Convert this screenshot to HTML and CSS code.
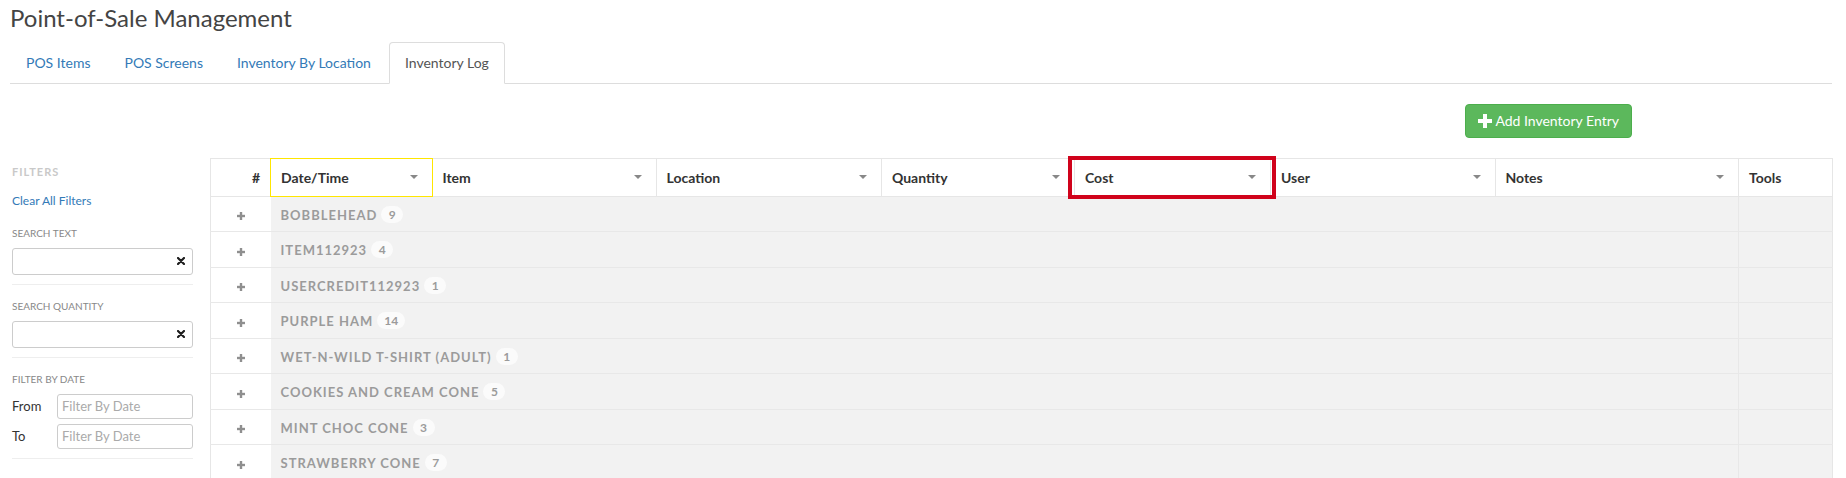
FILE: index.html
```html
<!DOCTYPE html>
<html>
<head>
<meta charset="utf-8">
<title>Point-of-Sale Management</title>
<link rel="stylesheet" href="styles.css">
</head>
<body>
<div class="page">
  <h1 class="title">Point-of-Sale Management</h1>
  <ul class="tabs">
    <li><a>POS Items</a></li>
    <li><a>POS Screens</a></li>
    <li><a>Inventory By Location</a></li>
    <li class="active"><a>Inventory Log</a></li>
  </ul>

  <div class="toolbar">
    <button class="btn-add" type="button">
      <svg class="plus-icon" width="14" height="14" viewBox="0 0 14 14"><rect x="5" y="0" width="4" height="14" fill="#fff"/><rect x="0" y="5" width="14" height="4" fill="#fff"/></svg>
      <span>Add Inventory Entry</span>
    </button>
  </div>

  <div class="content">
    <aside class="filters">
      <div class="f-title">Filters</div>
      <a class="f-clear">Clear All Filters</a>

      <div class="f-label f-first">Search Text</div>
      <div class="f-input">
        <input type="text">
        <svg class="x-icon" width="8" height="8" viewBox="0 0 8 8"><path d="M1 1 L7 7 M7 1 L1 7" stroke="#1e1e1e" stroke-width="2.2" stroke-linecap="round"/></svg>
      </div>
      <div class="f-sep"></div>

      <div class="f-label">Search Quantity</div>
      <div class="f-input">
        <input type="text">
        <svg class="x-icon" width="8" height="8" viewBox="0 0 8 8"><path d="M1 1 L7 7 M7 1 L1 7" stroke="#1e1e1e" stroke-width="2.2" stroke-linecap="round"/></svg>
      </div>
      <div class="f-sep"></div>

      <div class="f-label">Filter By Date</div>
      <div class="f-date">
        <span class="f-date-label">From</span>
        <input class="f-date-input" type="text" placeholder="Filter By Date">
      </div>
      <div class="f-date f-date-second">
        <span class="f-date-label">To</span>
        <input class="f-date-input" type="text" placeholder="Filter By Date">
      </div>
      <div class="f-sep"></div>
    </aside>

    <table class="grid">
      <colgroup>
        <col class="c-num"><col class="c-date"><col class="c-item"><col class="c-loc"><col class="c-qty"><col class="c-cost"><col class="c-user"><col class="c-notes"><col class="c-tools">
      </colgroup>
      <thead>
        <tr>
          <th class="th-num">#</th>
          <th class="th-sel"><div class="th-in"><span>Date/Time</span><i class="caret"></i></div></th>
          <th><div class="th-in"><span>Item</span><i class="caret"></i></div></th>
          <th><div class="th-in"><span>Location</span><i class="caret"></i></div></th>
          <th><div class="th-in"><span>Quantity</span><i class="caret"></i></div></th>
          <th class="th-mark"><div class="th-in"><span>Cost</span><i class="caret"></i></div></th>
          <th><div class="th-in"><span>User</span><i class="caret"></i></div></th>
          <th><div class="th-in"><span>Notes</span><i class="caret"></i></div></th>
          <th><div class="th-in"><span>Tools</span></div></th>
        </tr>
      </thead>
      <tbody>
        <tr><td class="td-exp"><svg class="row-plus" width="8" height="8" viewBox="0 0 8 8"><rect x="2.8" y="0" width="2.4" height="8" fill="#8f8f8f"/><rect x="0" y="2.8" width="8" height="2.4" fill="#8f8f8f"/></svg></td><td class="td-group" colspan="7"><span class="g-name">Bobblehead</span><span class="g-count">9</span></td><td class="td-tools"></td></tr>
        <tr><td class="td-exp"><svg class="row-plus" width="8" height="8" viewBox="0 0 8 8"><rect x="2.8" y="0" width="2.4" height="8" fill="#8f8f8f"/><rect x="0" y="2.8" width="8" height="2.4" fill="#8f8f8f"/></svg></td><td class="td-group" colspan="7"><span class="g-name">Item112923</span><span class="g-count">4</span></td><td class="td-tools"></td></tr>
        <tr><td class="td-exp"><svg class="row-plus" width="8" height="8" viewBox="0 0 8 8"><rect x="2.8" y="0" width="2.4" height="8" fill="#8f8f8f"/><rect x="0" y="2.8" width="8" height="2.4" fill="#8f8f8f"/></svg></td><td class="td-group" colspan="7"><span class="g-name">UserCredit112923</span><span class="g-count">1</span></td><td class="td-tools"></td></tr>
        <tr><td class="td-exp"><svg class="row-plus" width="8" height="8" viewBox="0 0 8 8"><rect x="2.8" y="0" width="2.4" height="8" fill="#8f8f8f"/><rect x="0" y="2.8" width="8" height="2.4" fill="#8f8f8f"/></svg></td><td class="td-group" colspan="7"><span class="g-name">Purple Ham</span><span class="g-count">14</span></td><td class="td-tools"></td></tr>
        <tr><td class="td-exp"><svg class="row-plus" width="8" height="8" viewBox="0 0 8 8"><rect x="2.8" y="0" width="2.4" height="8" fill="#8f8f8f"/><rect x="0" y="2.8" width="8" height="2.4" fill="#8f8f8f"/></svg></td><td class="td-group" colspan="7"><span class="g-name">Wet-N-Wild T-Shirt (Adult)</span><span class="g-count">1</span></td><td class="td-tools"></td></tr>
        <tr><td class="td-exp"><svg class="row-plus" width="8" height="8" viewBox="0 0 8 8"><rect x="2.8" y="0" width="2.4" height="8" fill="#8f8f8f"/><rect x="0" y="2.8" width="8" height="2.4" fill="#8f8f8f"/></svg></td><td class="td-group" colspan="7"><span class="g-name">Cookies and Cream Cone</span><span class="g-count">5</span></td><td class="td-tools"></td></tr>
        <tr><td class="td-exp"><svg class="row-plus" width="8" height="8" viewBox="0 0 8 8"><rect x="2.8" y="0" width="2.4" height="8" fill="#8f8f8f"/><rect x="0" y="2.8" width="8" height="2.4" fill="#8f8f8f"/></svg></td><td class="td-group" colspan="7"><span class="g-name">Mint Choc Cone</span><span class="g-count">3</span></td><td class="td-tools"></td></tr>
        <tr><td class="td-exp"><svg class="row-plus" width="8" height="8" viewBox="0 0 8 8"><rect x="2.8" y="0" width="2.4" height="8" fill="#8f8f8f"/><rect x="0" y="2.8" width="8" height="2.4" fill="#8f8f8f"/></svg></td><td class="td-group" colspan="7"><span class="g-name">Strawberry Cone</span><span class="g-count">7</span></td><td class="td-tools"></td></tr>
      </tbody>
    </table>
  </div>
</div>
</body>
</html>
```

FILE: styles.css
```css
* { box-sizing: border-box; }

body {
  margin: 0;
  background: #fff;
  color: #333;
  font-family: Lato, "Open Sans", "Liberation Sans", sans-serif;
}

.page {
  padding: 0 14px 0 10px;
}

.title {
  margin: 5px 0 0 0;
  font-size: 24px;
  line-height: 1.1;
  font-weight: 400;
  color: #444;
}

/* Tabs */
.tabs {
  list-style: none;
  margin: 10.6px 0 0 0;
  padding: 0;
  display: flex;
  border-bottom: 1px solid #ddd;
}
.tabs li {
  margin-right: 2px;
  margin-bottom: -1px;
}
.tabs a {
  display: block;
  padding: 10px 15px;
  font-size: 14px;
  line-height: 20px;
  color: #337ab7;
  border: 1px solid transparent;
  border-radius: 4px 4px 0 0;
}
.tabs .active a {
  color: #555;
  background: #fff;
  border-color: #ddd #ddd transparent;
}

/* Toolbar */
.toolbar {
  display: flex;
  justify-content: flex-end;
  padding-right: 200px;
  margin-top: 20px;
}
.btn-add {
  display: inline-flex;
  align-items: center;
  gap: 3px;
  height: 34px;
  padding: 6px 12px;
  font-family: Lato, "Open Sans", sans-serif;
  font-size: 14px;
  line-height: 20px;
  color: #fff;
  background: #5cb85c;
  border: 1px solid #4cae4c;
  border-radius: 4px;
}
.plus-icon { display: block; }

/* Content */
.content {
  display: flex;
  align-items: flex-start;
  gap: 17px;
  margin-top: 20px;
}

/* Filters sidebar */
.filters {
  flex: none;
  width: 181px;
  margin-left: 2px;
  padding-top: 7px;
}
.f-title {
  font-size: 11px;
  line-height: 14px;
  font-weight: 700;
  letter-spacing: 1px;
  text-transform: uppercase;
  color: #c9c9c9;
}
.f-clear {
  display: block;
  margin-top: 14px;
  font-size: 12px;
  line-height: 16px;
  color: #337ab7;
}
.f-label {
  font-size: 10px;
  line-height: 14px;
  color: #888;
  text-transform: uppercase;
  margin-bottom: 8px;
}
.f-first { margin-top: 17px; }
.f-input {
  display: flex;
  align-items: center;
  height: 27px;
  border: 1px solid #ccc;
  border-radius: 3px;
  padding-right: 7px;
}
.f-input input {
  flex: 1;
  min-width: 0;
  height: 100%;
  border: 0;
  outline: none;
  background: transparent;
  font: 13px Lato, sans-serif;
}
.x-icon { display: block; flex: none; }
.f-sep {
  height: 1px;
  background: #eee;
  margin: 9px 0 14px;
}
.f-date {
  display: flex;
  align-items: center;
  height: 25px;
}
.f-date-second { margin-top: 5px; }
.f-date-label {
  width: 45px;
  flex: none;
  font-size: 13px;
  color: #333;
}
.f-date-input {
  flex: 1;
  min-width: 0;
  height: 25px;
  padding: 0 4px;
  border: 1px solid #ccc;
  border-radius: 3px;
  font: 13px Lato, sans-serif;
  color: #555;
}
.f-date-input::placeholder { color: #aaa; }

/* Grid */
.grid {
  flex: 1;
  width: 1622px;
  border-collapse: collapse;
  table-layout: fixed;
  font-size: 14px;
}
.c-num { width: 60px; }
.c-date { width: 161.5px; }
.c-item { width: 224px; }
.c-loc { width: 225.5px; }
.c-qty { width: 193px; }
.c-cost { width: 196px; }
.c-user { width: 224.5px; }
.c-notes { width: 243.5px; }
.c-tools { width: 94px; }

.grid th {
  position: relative;
  height: 38px;
  padding: 0 10px;
  border: 1px solid #e6e6e6;
  background: #fff;
  font-weight: 700;
  color: #333;
  text-align: left;
  white-space: nowrap;
}
.grid th.th-num { text-align: right; }
.th-in {
  display: flex;
  align-items: center;
  justify-content: space-between;
}
.caret {
  width: 0;
  height: 0;
  margin-right: 4px;
  border-left: 4px solid transparent;
  border-right: 4px solid transparent;
  border-top: 4px solid #888;
}
.th-sel::after {
  content: "";
  position: absolute;
  left: -1px;
  top: -1px;
  right: -1px;
  bottom: -1px;
  border: 1px solid #ffe600;
  pointer-events: none;
  z-index: 2;
}
.th-mark::after {
  content: "";
  position: absolute;
  left: -7px;
  top: -3px;
  right: -6px;
  bottom: -3px;
  border: 4px solid #d0021b;
  pointer-events: none;
  z-index: 3;
}

.grid td {
  height: 35.5px;
  padding: 0 10px;
  border-top: 1px solid #e8e8e8;
  border-bottom: 1px solid #e8e8e8;
  vertical-align: middle;
}
.td-exp {
  background: #fff;
  text-align: center;
  border-left: 1px solid #e6e6e6;
}
.row-plus { display: inline-block; vertical-align: middle; }
.td-group {
  background: #f2f2f2;
  white-space: nowrap;
}
.td-tools {
  background: #f2f2f2;
  border-left: 1px solid #e8e8e8;
  border-right: 1px solid #e6e6e6;
}
.g-name {
  font-size: 13px;
  font-weight: 700;
  letter-spacing: 1px;
  text-transform: uppercase;
  color: #9b9b9b;
}
.g-count {
  display: inline-block;
  margin-left: 4px;
  min-width: 22px;
  height: 17px;
  padding: 0 7px;
  border-radius: 9px;
  background: #fbfbfb;
  font-size: 12px;
  line-height: 17px;
  font-weight: 700;
  color: #9b9b9b;
  text-align: center;
  vertical-align: 1px;
}
```
